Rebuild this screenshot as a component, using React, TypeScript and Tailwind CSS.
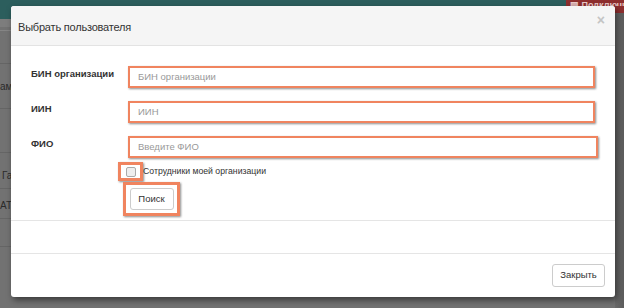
import React from "react";

const font = { fontFamily: '"Liberation Sans", Arial, sans-serif' };

function Field({ label, placeholder, wide }: { label: string; placeholder: string; wide?: boolean }) {
  return (
    <div className="flex items-start h-[35px]">
      <div className="w-[117px] pl-[20px] pt-[1px] text-[9.5px] font-bold text-[#333] leading-[14px] whitespace-nowrap">{label}</div>
      <div
        className={
          "h-[22px] border-2 border-[#f0845f] shadow-[1px_1px_2px_rgba(0,0,0,0.45)] bg-white flex items-center pl-[8px] text-[9.5px] text-[#999] " +
          (wide ? "w-[470px]" : "w-[467px]")
        }
      >
        {placeholder}
      </div>
    </div>
  );
}

export default function App() {
  return (
    <div className="relative w-[624px] h-[308px] overflow-hidden bg-[#727272]" style={font}>
      {/* background page under overlay */}
      <div className="absolute inset-x-0 top-0 h-[19px] bg-[#2c5e5d]" />
      <div className="absolute right-0 top-0 w-[58px] h-[13px] bg-[#8e2e2e]" />
      <div className="absolute right-0 top-0 w-[54px] h-[6px] overflow-hidden text-[9px] text-[#e8c8c8] leading-[10px] font-bold whitespace-nowrap">▤ Подключи</div>
      <div className="absolute inset-x-0 top-[19px] h-[8px] bg-[#7d7d7d]" />
      <div className="absolute inset-x-0 top-[30px] h-px bg-[#858585]" />
      <div className="absolute inset-x-0 top-[63px] h-px bg-[#656565]" />
      <div className="absolute inset-x-0 top-[108px] h-px bg-[#656565]" />
      <div className="absolute inset-x-0 top-[152px] h-px bg-[#656565]" />
      <div className="absolute inset-x-0 top-[188px] h-px bg-[#656565]" />
      <div className="absolute inset-x-0 top-[218px] h-px bg-[#656565]" />
      <div className="absolute inset-x-0 top-[246px] h-px bg-[#656565]" />
      <div className="absolute left-0 top-[79px] text-[10px] text-[#2a2a2a]">ам</div>
      <div className="absolute left-[2px] top-[168px] text-[10px] text-[#2a2a2a]">Га</div>
      <div className="absolute left-0 top-[198px] text-[10px] text-[#2a2a2a]">АТ</div>
      <div className="absolute right-0 top-[13px] w-[9px] h-[295px] bg-gradient-to-r from-[#6a6a6a] to-[#5c5c5c]" />

      {/* modal */}
      <div className="absolute left-[11px] top-[6px] w-[604px] h-[291px] bg-white rounded-[3px] shadow-[2px_3px_6px_rgba(0,0,0,0.5)] flex flex-col overflow-hidden">
        <div className="h-[40px] shrink-0 bg-[#f5f5f5] border-b border-[#e3e3e3] flex items-center justify-between pl-[7px] pr-[10px] pt-[3px]">
          <div className="text-[11px] tracking-[-0.2px] text-[#333]">Выбрать пользователя</div>
          <div className="text-[14px] text-[#c4c4c4] font-bold leading-none -mt-[14px]">×</div>
        </div>
        <div className="h-[175px] shrink-0 border-b border-[#e5e5e5] pt-[20px] flex flex-col">
          <Field label="БИН организации" placeholder="БИН организации" />
          <Field label="ИИН" placeholder="ИИН" />
          <Field label="ФИО" placeholder="Введите ФИО" wide />
          <div className="flex items-center h-[19px] -mt-[9px] pl-[107px]">
            <div className="w-[25px] h-[19px] border-[3px] border-[#f0845f] shadow-[1px_1px_2px_rgba(0,0,0,0.45)] flex items-center justify-center">
              <div className="w-[10px] h-[10px] border border-[#aaa] rounded-[2px] bg-[#eee]" />
            </div>
            <div className="text-[8.7px] text-[#333]">Сотрудники моей организации</div>
          </div>
          <div className="pl-[112px] mt-[1px]">
            <div className="w-[57px] h-[34px] border-[3px] border-[#f0845f] shadow-[1px_1px_2px_rgba(0,0,0,0.45)] flex items-center justify-center">
              <div className="w-[44px] h-[22px] border border-[#ccc] rounded-[3px] bg-white flex items-center justify-center text-[9.5px] text-[#333]">Поиск</div>
            </div>
          </div>
        </div>
        <div className="h-[33px] shrink-0 border-b border-[#e5e5e5]" />
        <div className="flex-1 flex items-start justify-end pt-[10px] pr-[10px]">
          <div className="w-[53px] h-[23px] border border-[#ccc] rounded-[3px] bg-white flex items-center justify-center text-[9.5px] text-[#333]">Закрыть</div>
        </div>
      </div>
    </div>
  );
}
